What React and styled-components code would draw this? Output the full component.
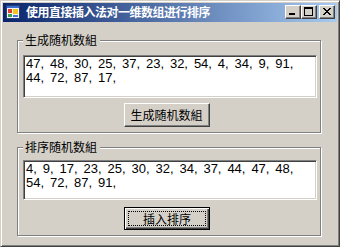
import React from 'react';
import styled, { createGlobalStyle } from 'styled-components';

const GlobalStyle = createGlobalStyle`
  html, body {
    margin: 0;
    padding: 0;
    background: #d4d0c8;
  }
  * {
    box-sizing: border-box;
  }
`;

const cjk = `"Noto Sans CJK SC", "Noto Sans CJK TC", sans-serif`;

const randomLines = [
  '47, 48, 30, 25, 37, 23, 32, 54, 4, 34, 9, 91,',
  '44, 72, 87, 17,',
];

const sortedLines = [
  '4, 9, 17, 23, 25, 30, 32, 34, 37, 44, 47, 48,',
  '54, 72, 87, 91,',
];

function AppIcon() {
  return (
    <svg width="16" height="16" viewBox="0 0 16 16">
      <rect x="1.5" y="1.5" width="13" height="13" fill="#f4f4f4" stroke="#24407a" />
      <rect x="2" y="2" width="12" height="2" fill="#3a6bd0" />
      <rect x="3" y="5" width="4" height="4" fill="#e0402c" />
      <rect x="8" y="5" width="5" height="5" fill="#f4c51c" />
      <rect x="3" y="10" width="4" height="3" fill="#3ba34a" />
      <rect x="8" y="11" width="5" height="2" fill="#4a74d6" />
    </svg>
  );
}

function CaptionGlyph({ kind }) {
  if (kind === 'min') {
    return (
      <svg width="10" height="9" viewBox="0 0 10 9">
        <rect x="1" y="6" width="6" height="2" fill="#000" />
      </svg>
    );
  }
  if (kind === 'max') {
    return (
      <svg width="10" height="9" viewBox="0 0 10 9">
        <rect x="0.5" y="0.5" width="8" height="8" fill="none" stroke="#000" />
        <rect x="0" y="1" width="9" height="1" fill="#000" />
      </svg>
    );
  }
  return (
    <svg width="10" height="9" viewBox="0 0 10 9">
      <path d="M1 1 L8 8 M2 1 L9 8 M8 1 L1 8 M9 1 L2 8" stroke="#000" strokeWidth="1" />
    </svg>
  );
}

function GroupPanel({ title, lines, buttonText, isDefault, boxHeight, topPad, gap, buttonHeight }) {
  return (
    <Group $topPad={topPad}>
      <GroupLabel>{title}</GroupLabel>
      <TextBox $height={boxHeight}>
        {lines.map((line, i) => (
          <TextLine key={i}>{line}</TextLine>
        ))}
      </TextBox>
      <Button $default={isDefault} $gap={gap} $height={buttonHeight}>
        {isDefault ? <FocusRing>{buttonText}</FocusRing> : buttonText}
      </Button>
    </Group>
  );
}

export default function App() {
  return (
    <>
      <GlobalStyle />
      <Window>
        <TitleBar>
          <AppIcon />
          <TitleText>使用直接插入法对一维数组进行排序</TitleText>
          <CaptionButtons>
            <CaptionButton>
              <CaptionGlyph kind="min" />
            </CaptionButton>
            <CaptionButton>
              <CaptionGlyph kind="max" />
            </CaptionButton>
            <CaptionButton $close>
              <CaptionGlyph kind="close" />
            </CaptionButton>
          </CaptionButtons>
        </TitleBar>
        <Client>
          <GroupPanel
            title="生成随机数組"
            lines={randomLines}
            buttonText="生成随机数組"
            boxHeight={43}
            topPad={14}
            gap={5}
            buttonHeight={24}
          />
          <GroupPanel
            title="排序随机数組"
            lines={sortedLines}
            buttonText="插入排序"
            isDefault
            boxHeight={40}
            topPad={12}
            gap={7}
            buttonHeight={23}
          />
        </Client>
      </Window>
    </>
  );
}

const Window = styled.div`
  width: 340px;
  height: 247px;
  background: #d4d0c8;
  border: 1px solid;
  border-color: #d4d0c8 #404040 #404040 #d4d0c8;
  box-shadow: inset 1px 1px 0 #ffffff, inset -1px -1px 0 #808080;
  padding: 2px;
  display: flex;
  flex-direction: column;
`;

const TitleBar = styled.div`
  height: 19px;
  background: linear-gradient(to right, #0a246a, #a6caf0);
  display: flex;
  align-items: center;
  padding: 0 2px 1px 2px;
  flex-shrink: 0;
`;

const TitleText = styled.div`
  margin-left: 5px;
  color: #ffffff;
  font-family: ${cjk};
  font-weight: bold;
  font-size: 12px;
  letter-spacing: -0.5px;
  line-height: 16px;
  white-space: nowrap;
  flex: 1;
`;

const CaptionButtons = styled.div`
  display: flex;
  align-items: center;
`;

const CaptionButton = styled.div`
  width: 16px;
  height: 14px;
  margin-left: ${({ $close }) => ($close ? '2px' : '0')};
  background: #d4d0c8;
  border: 1px solid;
  border-color: #ffffff #404040 #404040 #ffffff;
  box-shadow: inset -1px -1px 0 #808080;
  display: flex;
  align-items: center;
  justify-content: center;
  padding: 0 1px 1px 0;
`;

const Client = styled.div`
  flex: 1;
  display: flex;
  flex-direction: column;
  gap: 14px;
  padding: 18px 0 0 14px;
`;

const Group = styled.div`
  position: relative;
  width: 304px;
  border: 1px solid #808080;
  box-shadow: inset 1px 1px 0 #ffffff, 1px 1px 0 #ffffff;
  padding: ${({ $topPad }) => $topPad}px 3px 5px 5px;
  display: flex;
  flex-direction: column;
  align-items: flex-start;
`;

const GroupLabel = styled.div`
  position: absolute;
  top: -8px;
  left: 5px;
  padding: 0 3px 0 2px;
  background: #d4d0c8;
  color: #000000;
  font-family: ${cjk};
  font-size: 12px;
  line-height: 14px;
`;

const TextBox = styled.div`
  width: 294px;
  height: ${({ $height }) => $height}px;
  background: #ffffff;
  border: 1px solid;
  border-color: #808080 #ffffff #ffffff #808080;
  box-shadow: inset 1px 1px 0 #404040, inset -1px -1px 0 #d4d0c8;
  padding: 1px 2px 0 2px;
  font-family: "Liberation Sans", Arial, sans-serif;
  font-size: 13px;
  line-height: 14px;
  word-spacing: 2.3px;
  color: #000000;
  overflow: hidden;
`;

const TextLine = styled.div`
  white-space: pre;
`;

const Button = styled.div`
  margin-top: ${({ $gap }) => $gap}px;
  margin-left: 101px;
  width: 86px;
  height: ${({ $height }) => $height}px;
  background: #d4d0c8;
  border: 1px solid;
  border-color: ${({ $default }) =>
    $default ? '#000000' : '#ffffff #404040 #404040 #ffffff'};
  box-shadow: ${({ $default }) =>
    $default
      ? 'inset 1px 1px 0 #ffffff, inset -1px -1px 0 #404040, inset -2px -2px 0 #808080'
      : 'inset -1px -1px 0 #808080'};
  display: flex;
  align-items: center;
  justify-content: center;
  padding: ${({ $default }) => ($default ? '3px' : '0 1px 1px 0')};
  font-family: ${cjk};
  font-size: 12px;
  color: #000000;
`;

const FocusRing = styled.div`
  width: 100%;
  height: 100%;
  border: 1px dotted #000000;
  display: flex;
  align-items: center;
  justify-content: center;
  line-height: 14px;
`;
